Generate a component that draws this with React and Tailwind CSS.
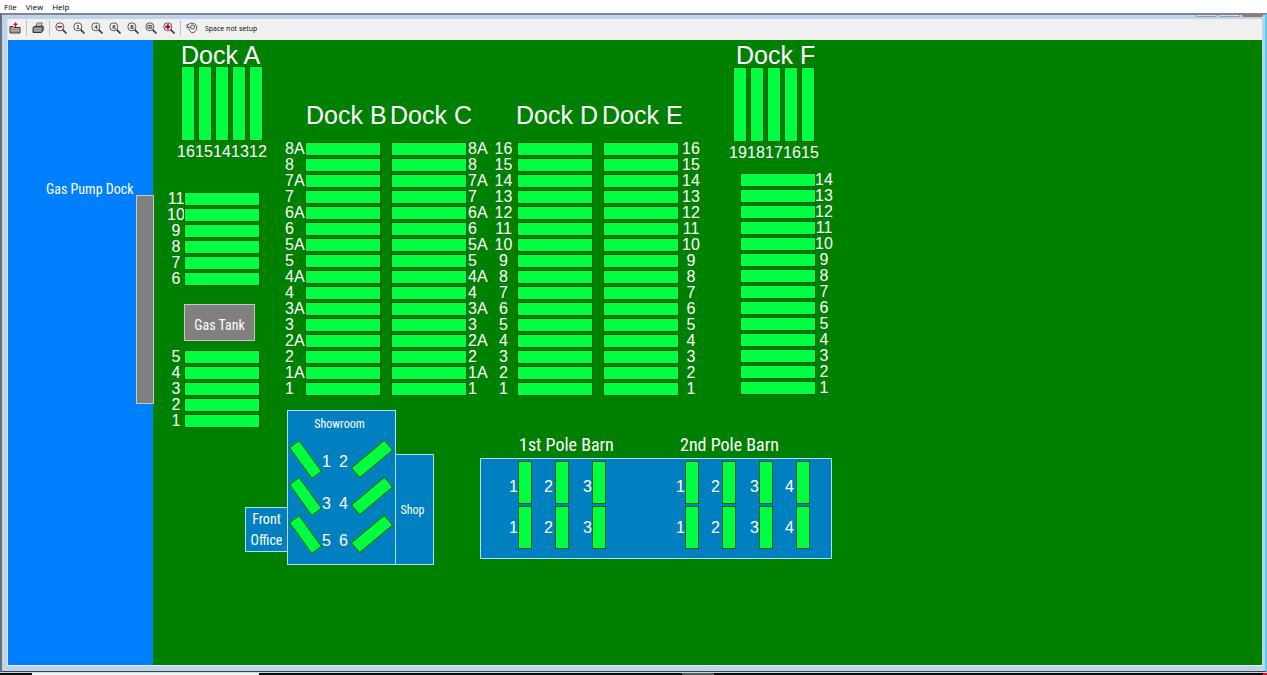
import React from "react";

// ==================== MAP DATA ====================
const range = (from, to) =>
  Array.from({ length: from - to + 1 }, (_, i) => String(from - i));

const withA = range(8, 1).flatMap((n) => [`${n}A`, n]);

const DOCKS = [
  { id: "B", place: "left-[277px] top-[102px]", side: "left", label: "w-5", labels: withA },
  { id: "C", place: "left-[383px] top-[102px]", side: "right", label: "w-5 pl-px", labels: withA },
  { id: "D", place: "left-[486px] top-[102px]", side: "left", label: "w-[23px] pr-1 justify-center", labels: range(16, 1) },
  { id: "E", place: "left-[595px] top-[102px]", side: "right", label: "w-6 justify-center", labels: range(16, 1) },
  { id: "F", place: "left-[732px] top-[133px]", side: "right", label: "w-4 justify-center", labels: range(14, 1) },
  { id: "A-upper", place: "left-[158px] top-[152px]", side: "left", label: "w-[18px] pl-0.5 justify-center", labels: range(11, 6) },
  { id: "A-lower", place: "left-[158px] top-[310px]", side: "left", label: "w-[18px] pl-0.5 justify-center", labels: range(5, 1) },
];

const TITLES = [
  { text: "Dock A", place: "left-[173px] top-0" },
  { text: "Dock B", place: "left-[298px] top-[60px]" },
  { text: "Dock C", place: "left-[382px] top-[60px]" },
  { text: "Dock D", place: "left-[508px] top-[60px]" },
  { text: "Dock E", place: "left-[594px] top-[60px]" },
  { text: "Dock F", place: "left-[728px] top-0" },
];

const SHOWROOM = [
  { left: "1", right: "2", place: "top-[28px]", num: "top-[42px]" },
  { left: "3", right: "4", place: "top-[65px]", num: "top-[84px]" },
  { left: "5", right: "6", place: "top-[103px]", num: "top-[121px]" },
];

const ZOOMS = ["1", "4", "6", "8"];

// ==================== MAP PIECES ====================
function Slot({ className }) {
  return <div className={`shrink-0 border border-[#06600f] bg-[#00ff40] ${className}`} />;
}

function Dock({ place, side, label, labels }) {
  return (
    <div className={`absolute flex flex-col gap-0.5 ${place}`}>
      {labels.map((name) => (
        <div key={name} className={`flex ${side === "left" ? "" : "flex-row-reverse"}`}>
          <span className={`flex h-3.5 shrink-0 items-center text-base leading-none ${label}`}>
            {name}
          </span>
          <Slot className="h-3.5 w-[76px]" />
        </div>
      ))}
    </div>
  );
}

function TopDock({ place, labels }) {
  return (
    <div className={`absolute flex flex-col items-center gap-0.5 ${place}`}>
      <div className="flex gap-[3px]">
        {labels.map((name) => (
          <Slot key={name} className="h-[75px] w-3.5" />
        ))}
      </div>
      <div className="flex">
        {labels.map((name) => (
          <span key={name} className="w-[18px] text-center text-base leading-[18px]">
            {name}
          </span>
        ))}
      </div>
    </div>
  );
}

function BarnRows({ place, columns }) {
  return (
    <div className={`absolute flex flex-col gap-0.5 ${place}`}>
      {["pt-4", "pt-3"].map((row) => (
        <div key={row} className="flex">
          {columns.map((col) => (
            <div key={col.name} className={`flex justify-end ${col.width}`}>
              <span className={`text-base leading-5 ${row} ${col.gap}`}>{col.name}</span>
              <Slot className="h-[43px] w-3.5" />
            </div>
          ))}
        </div>
      ))}
    </div>
  );
}

function Building({ className, children }) {
  return (
    <div className={`absolute border border-[#b5dcf0] bg-[#0080c0] font-['Roboto_Condensed','Open_Sans_Condensed','Liberation_Sans',sans-serif] ${className}`}>
      {children}
    </div>
  );
}

function YardMap() {
  return (
    <main className="relative min-h-0 flex-1 overflow-hidden bg-[#008000] font-['Liberation_Sans',Arial,sans-serif] text-white">
      {/* Water and gas dock */}
      <div className="absolute inset-y-0 left-0 w-[145px] bg-[#0080ff]" />
      <div className="absolute left-32 top-[155px] h-[209px] w-[18px] border border-[#c8c8c8] bg-[#808080]" />
      <span className="absolute left-[38px] top-[139px] whitespace-nowrap font-['Roboto_Condensed','Open_Sans_Condensed','Liberation_Sans',sans-serif] text-sm leading-5">
        Gas Pump Dock
      </span>
      <div className="absolute left-44 top-[264px] flex h-[37px] w-[71px] items-center justify-center whitespace-nowrap border border-[#c8c8c8] bg-[#808080] pt-1 font-['Roboto_Condensed','Open_Sans_Condensed','Liberation_Sans',sans-serif] text-sm">
        Gas Tank
      </div>

      {/* Docks */}
      {TITLES.map((t) => (
        <h2 key={t.text} className={`absolute whitespace-nowrap text-[25px] leading-[30px] ${t.place}`}>
          {t.text}
        </h2>
      ))}
      <TopDock place="left-[169px] top-[26px]" labels={range(16, 12)} />
      <TopDock place="left-[721px] top-[27px]" labels={range(19, 15)} />
      {DOCKS.map((d) => (
        <Dock key={d.id} {...d} />
      ))}

      {/* Showroom, shop and office */}
      <Building className="left-[237px] top-[467px] flex h-[45px] w-[43px] items-center justify-center text-center text-sm leading-[21px]">
        Front Office
      </Building>
      <Building className="left-[387px] top-[414px] flex h-[111px] w-[39px] items-center justify-center pr-1 text-xs">
        Shop
      </Building>
      <Building className="left-[279px] top-[370px] h-[155px] w-[109px]">
        <h3 className="pr-1 pt-[3px] text-center text-xs leading-5">Showroom</h3>
        {SHOWROOM.map((row) => (
          <div key={row.left}>
            <div className={`absolute inset-x-0 flex h-10 items-center justify-between pr-px ${row.place}`}>
              <Slot className="-ml-0.5 h-[13px] w-[39px] rotate-[54deg]" />
              <Slot className="h-3.5 w-11 -rotate-40" />
            </div>
            <div className={`absolute left-[34px] flex gap-2 font-['Liberation_Sans',Arial,sans-serif] text-base leading-[18px] ${row.num}`}>
              <span>{row.left}</span>
              <span>{row.right}</span>
            </div>
          </div>
        ))}
      </Building>

      {/* Pole barns */}
      <h3 className="absolute left-[511px] top-[393px] whitespace-nowrap font-['Roboto_Condensed','Open_Sans_Condensed','Liberation_Sans',sans-serif] text-lg leading-6">
        1st Pole Barn
      </h3>
      <h3 className="absolute left-[672px] top-[393px] whitespace-nowrap font-['Roboto_Condensed','Open_Sans_Condensed','Liberation_Sans',sans-serif] text-lg leading-6">
        2nd Pole Barn
      </h3>
      <div className="absolute left-[472px] top-[418px] h-[101px] w-[352px] border border-[#b5dcf0] bg-[#0080c0]" />
      <BarnRows
        place="left-[498px] top-[421px]"
        columns={[
          { name: "1", width: "w-[26px]", gap: "" },
          { name: "2", width: "w-[37px]", gap: "pr-0.5" },
          { name: "3", width: "w-[37px]", gap: "" },
        ]}
      />
      <BarnRows
        place="left-[665px] top-[421px]"
        columns={[
          { name: "1", width: "w-[26px]", gap: "" },
          { name: "2", width: "w-[37px]", gap: "pr-0.5" },
          { name: "3", width: "w-[37px]", gap: "" },
          { name: "4", width: "w-[37px]", gap: "pr-0.5" },
        ]}
      />
    </main>
  );
}

// ==================== TOOLBAR ICONS ====================
function ZoomIcon({ children }) {
  return (
    <svg viewBox="0 0 12 12" className="size-3">
      <path d="M7.6 7.6 L11 11" stroke="#333" strokeWidth="1.7" strokeLinecap="round" />
      <circle cx="4.8" cy="4.8" r="4" fill="#f7f4f4" stroke="#555" strokeWidth="1" />
      {children}
    </svg>
  );
}

function ToolButton({ label, children }) {
  return (
    <button type="button" aria-label={label} className="flex size-[18px] items-center justify-center">
      {children}
    </button>
  );
}

function Divider() {
  return <div className="mx-0.5 h-4 w-px bg-[#c4c4c4]" />;
}

function Toolbar() {
  return (
    <div className="flex h-[21px] shrink-0 items-center bg-[#f0f0f0] pb-[3px] text-black">
      <div className="-ml-0.5 flex items-center">
        <ToolButton label="Open">
          <svg viewBox="0 0 12 12" className="size-3">
            <path d="M1 4.5h3l1 1h6v5.5H1z" fill="#b9a89a" stroke="#3a3030" />
            <path d="M2.5 7.5h7M3 9.3h6" stroke="#998878" strokeWidth="0.8" />
            <path d="M6.5 5V1.5M4.8 3L6.5 1.2 8.2 3" fill="none" stroke="#a02828" strokeWidth="1.2" />
          </svg>
        </ToolButton>
        <Divider />
        <ToolButton label="Print">
          <svg viewBox="0 0 12 12" className="size-3">
            <path d="M4 4.5L5.2 1h5L9 4.5z" fill="#fff" stroke="#444" strokeWidth="0.9" />
            <path d="M5.5 2.7h3" stroke="#777" strokeWidth="0.6" />
            <path d="M1 5.5L3 4.2h8.2v4L9.5 10.5H1z" fill="#777" stroke="#222" strokeWidth="0.9" />
            <path d="M1.5 6.8h8M2 8.8h7" stroke="#ddd" strokeWidth="0.7" />
          </svg>
        </ToolButton>
        <Divider />
        <ToolButton label="Zoom out">
          <ZoomIcon>
            <path d="M2.4 4.8h4.8" stroke="#c00018" strokeWidth="1.5" />
          </ZoomIcon>
        </ToolButton>
        {ZOOMS.map((z) => (
          <ToolButton key={z} label={`Zoom level ${z}`}>
            <ZoomIcon>
              <text x="4.8" y="7" textAnchor="middle" fontSize="6" fontWeight="bold" fontFamily="Liberation Sans" fill="#222">
                {z}
              </text>
            </ZoomIcon>
          </ToolButton>
        ))}
        <ToolButton label="Zoom to fit">
          <ZoomIcon>
            <path d="M2.9 3.3h3.8v3H2.9zM4.8 3.3v3" fill="none" stroke="#333" strokeWidth="0.8" />
          </ZoomIcon>
        </ToolButton>
        <ToolButton label="Zoom in">
          <ZoomIcon>
            <path d="M2.3 4.8h5M4.8 2.3v5" stroke="#d00018" strokeWidth="2" />
          </ZoomIcon>
        </ToolButton>
        <Divider />
        <ToolButton label="Refresh">
          <svg viewBox="0 0 12 12" className="size-3" fill="none" stroke="#444" strokeWidth="0.9">
            <path d="M1.3 5.5C1 2.5 4 .8 6.5 1.3c3 .2 4.7 2.7 4.2 5.2-.4 3-3 4.5-5.2 4.2" />
            <path d="M1.2 2v3.5h3.2M5.5 10.7L3.6 8.6M2 6.5l2.2 2" />
            <circle cx="6.6" cy="5" r="2" />
          </svg>
        </ToolButton>
      </div>
      <span className="pl-1 text-[7px] leading-none">Space not setup</span>
    </div>
  );
}

// ==================== APP ====================
function App() {
  return (
    <div className="flex h-screen flex-col overflow-hidden bg-white font-['Open_Sans','Noto_Sans',sans-serif]">
      {/* Menu bar */}
      <nav className="flex h-[13px] shrink-0 items-center gap-[9px] pl-1 text-[8px] leading-none text-black">
        <button type="button">File</button>
        <button type="button">View</button>
        <button type="button">Help</button>
      </nav>

      {/* Window frame */}
      <div className="relative flex min-h-0 flex-1 flex-col border-b border-l-2 border-r-2 border-t-2 border-b-[#38444c] border-l-[#666e78] border-r-[#5cc8ee] border-t-[#7d8696] bg-[#bfd3ea] pb-[5px] pl-[5px] pr-[3px] pt-1">
        <div className="absolute right-0.5 top-0 flex gap-0.5">
          <div className="h-0.5 w-[21px] rounded-b-sm border border-t-0 border-[#8a9ab0] bg-[#d5e0ee]" />
          <div className="h-0.5 w-[21px] rounded-b-sm border border-t-0 border-[#8a9ab0] bg-[#d5e0ee]" />
          <div className="h-0.5 w-[21px] rounded-b-sm bg-[#b5695c]" />
        </div>
        <div className="flex min-h-0 flex-1 flex-col border-b border-l border-b-[#e8f2f6] border-l-[#dfe8f0]">
          <Toolbar />
          <YardMap />
        </div>
      </div>

      {/* Taskbar edge */}
      <div className="flex h-[3px] shrink-0 border-t border-[#c9dbe4] bg-[#0c0a10]">
        <div className="ml-8 w-[227px] bg-[#f2f2f2]" />
        <div className="ml-[423px] w-8 bg-[#55585c]" />
        <div className="ml-auto w-1 bg-[#e81123]" />
      </div>
    </div>
  );
}

export default App;
